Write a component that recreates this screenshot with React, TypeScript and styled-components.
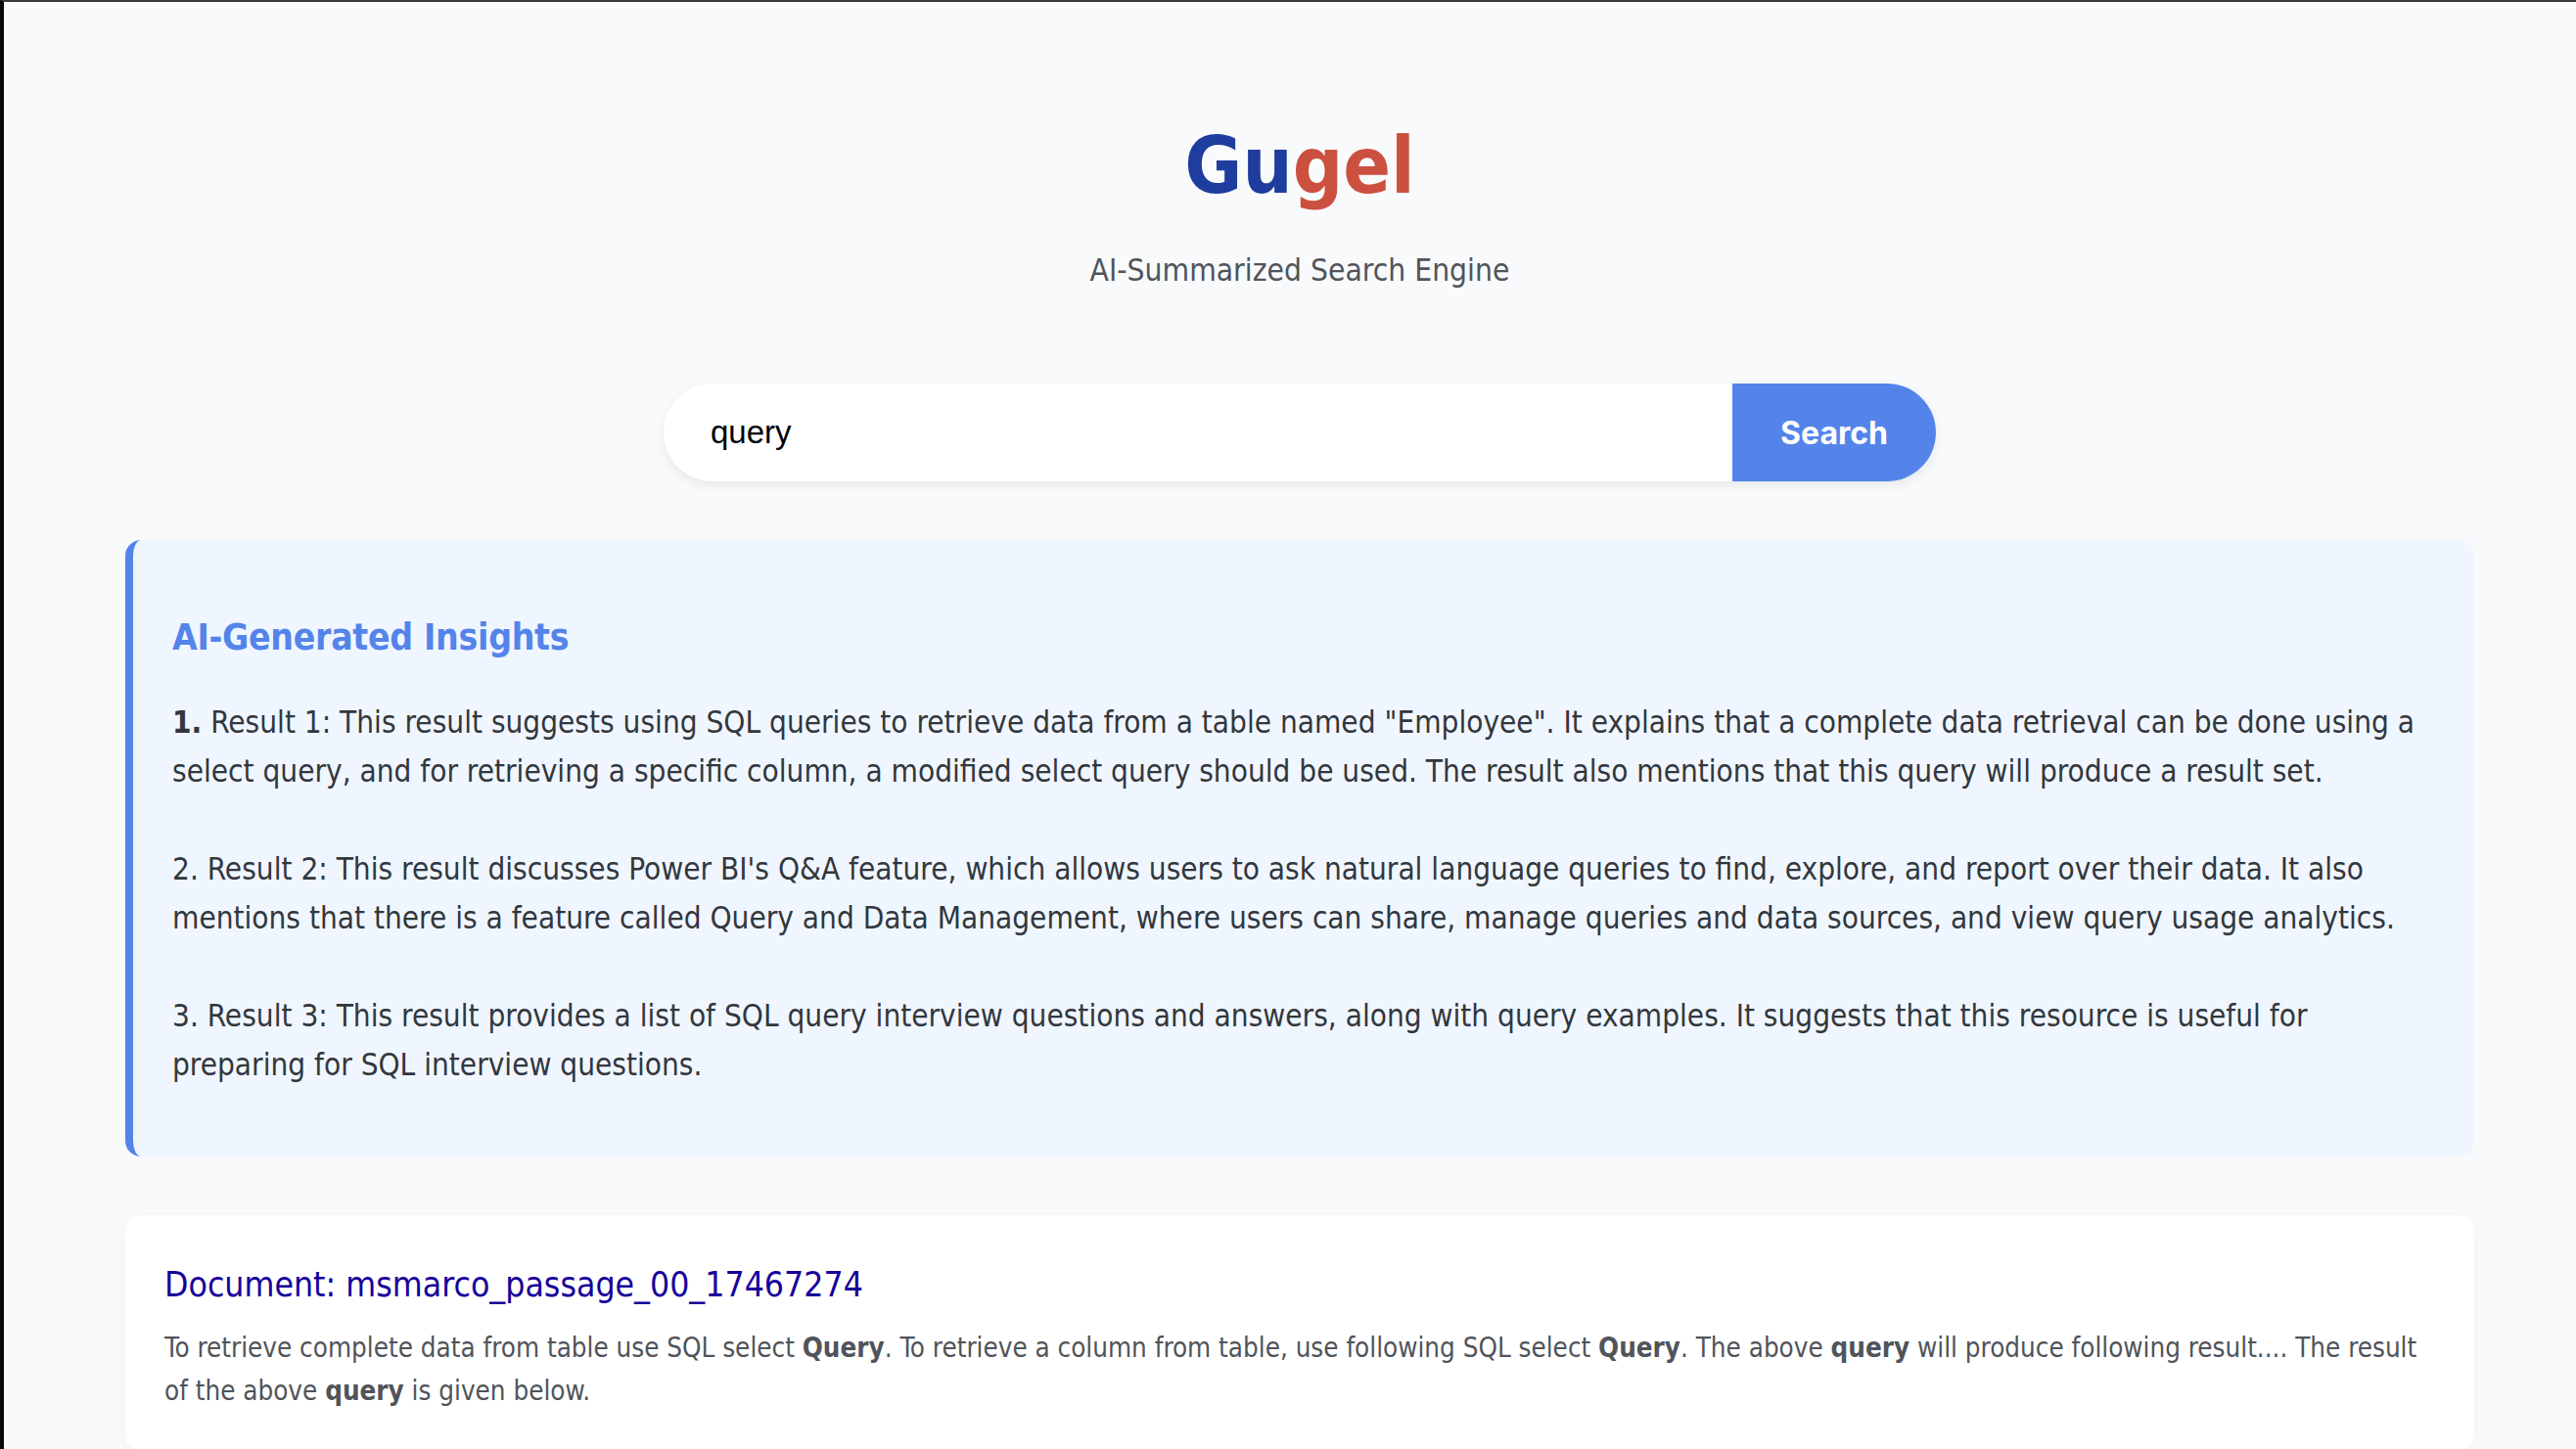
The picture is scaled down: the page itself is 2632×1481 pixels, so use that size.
import React, { FC } from "react";
import styled, { createGlobalStyle } from "styled-components";

const GlobalStyle = createGlobalStyle`
    html, body {
        margin: 0;
        padding: 0;
        height: 100%;
        overflow: hidden;
        background: #f9fafc;
    }
`;

const BODY_FONT = `"DejaVu Sans Condensed", "DejaVu Sans", sans-serif`;

const Page = styled.div`
    box-sizing: border-box;
    height: 100vh;
    overflow: hidden;
    border-left: 4px solid #0a0a0a;
    border-top: 2px solid #3a3a3a;
    padding: 0 104px 0 124px;
    background: #f9fafc;
    font-family: ${BODY_FONT};
    font-stretch: condensed;
`;

const Header = styled.header`
    display: flex;
    flex-direction: column;
    align-items: center;
    padding-top: 118px;
`;

const Logo = styled.h1`
    margin: 0;
    font-size: 80px;
    line-height: 100px;
    font-weight: 700;
    color: #1f3d9e;
`;

const LogoAccent = styled.span`
    color: #cc5040;
`;

const Tagline = styled.p`
    margin: 36px 0 0;
    font-size: 31.5px;
    line-height: 40px;
    color: #50545a;
`;

const SearchForm = styled.form`
    display: flex;
    width: 1300px;
    height: 100px;
    margin: 96px 0 0 550px;
    border-radius: 50px;
    background: #fff;
    box-shadow: 0 4px 12px rgba(0, 0, 0, 0.08);
`;

const SearchInput = styled.input`
    flex: 1;
    min-width: 0;
    border: 0;
    outline: 0;
    padding: 0 48px;
    background: transparent;
    border-radius: 50px 0 0 50px;
    font-family: "Liberation Sans", Arial, sans-serif;
    font-size: 33px;
    color: #000;
`;

const SearchButton = styled.button`
    width: 208px;
    border: 0;
    border-radius: 0 50px 50px 0;
    background: #5484ea;
    color: #fff;
    font-family: Inter, "Liberation Sans", sans-serif;
    font-size: 32px;
    font-weight: 700;
`;

const Insights = styled.section`
    box-sizing: border-box;
    height: 630px;
    margin-top: 60px;
    padding: 76px 40px 0 40px;
    background: #f0f6ff;
    border-left: 8px solid #5484ea;
    border-radius: 16px;
`;

const InsightsTitle = styled.h2`
    margin: 0 0 37px;
    font-size: 37px;
    letter-spacing: -0.3px;
    line-height: 48px;
    font-weight: 700;
    color: #5484ea;
`;

const InsightText = styled.p`
    margin: 0 0 50px;
    font-size: 31.25px;
    line-height: 50px;
    color: #32373d;
`;

const ResultCard = styled.article`
    box-sizing: border-box;
    margin-top: 60px;
    padding: 47px 40px 40px;
    background: #fff;
    border-radius: 16px;
    box-shadow: 0 2px 10px rgba(0, 0, 0, 0.04);
`;

const ResultTitle = styled.a`
    display: block;
    margin-bottom: 18px;
    font-size: 35.3px;
    line-height: 48px;
    color: #17009a;
    text-decoration: none;
`;

const ResultSnippet = styled.p`
    margin: 0;
    font-size: 27.55px;
    line-height: 44px;
    color: #50545a;
`;

const App: FC = () => {
    return (
        <Page>
            <GlobalStyle />
            <Header>
                <Logo>Gu<LogoAccent>gel</LogoAccent></Logo>
                <Tagline>AI-Summarized Search Engine</Tagline>
            </Header>
            <SearchForm onSubmit={e => e.preventDefault()}>
                <SearchInput defaultValue="query" />
                <SearchButton type="submit">Search</SearchButton>
            </SearchForm>
            <Insights>
                <InsightsTitle>AI-Generated Insights</InsightsTitle>
                <InsightText>
                    <strong>1.</strong> Result 1: This result suggests using SQL queries to retrieve data from a table named "Employee". It explains that a complete data retrieval can be done using a select query, and for retrieving a specific column, a modified select query should be used. The result also mentions that this query will produce a result set.
                </InsightText>
                <InsightText>
                    2. Result 2: This result discusses Power BI's Q&amp;A feature, which allows users to ask natural language queries to find, explore, and report over their data. It also mentions that there is a feature called Query and Data Management, where users can share, manage queries and data sources, and view query usage analytics.
                </InsightText>
                <InsightText>
                    3. Result 3: This result provides a list of SQL query interview questions and answers, along with query examples. It suggests that this resource is useful for preparing for SQL interview questions.
                </InsightText>
            </Insights>
            <ResultCard>
                <ResultTitle href="#">Document: msmarco_passage_00_17467274</ResultTitle>
                <ResultSnippet>
                    To retrieve complete data from table use SQL select <strong>Query</strong>. To retrieve a column from table, use following SQL select <strong>Query</strong>. The above <strong>query</strong> will produce following result.... The result of the above <strong>query</strong> is given below.
                </ResultSnippet>
            </ResultCard>
        </Page>
    );
};

export default App;
